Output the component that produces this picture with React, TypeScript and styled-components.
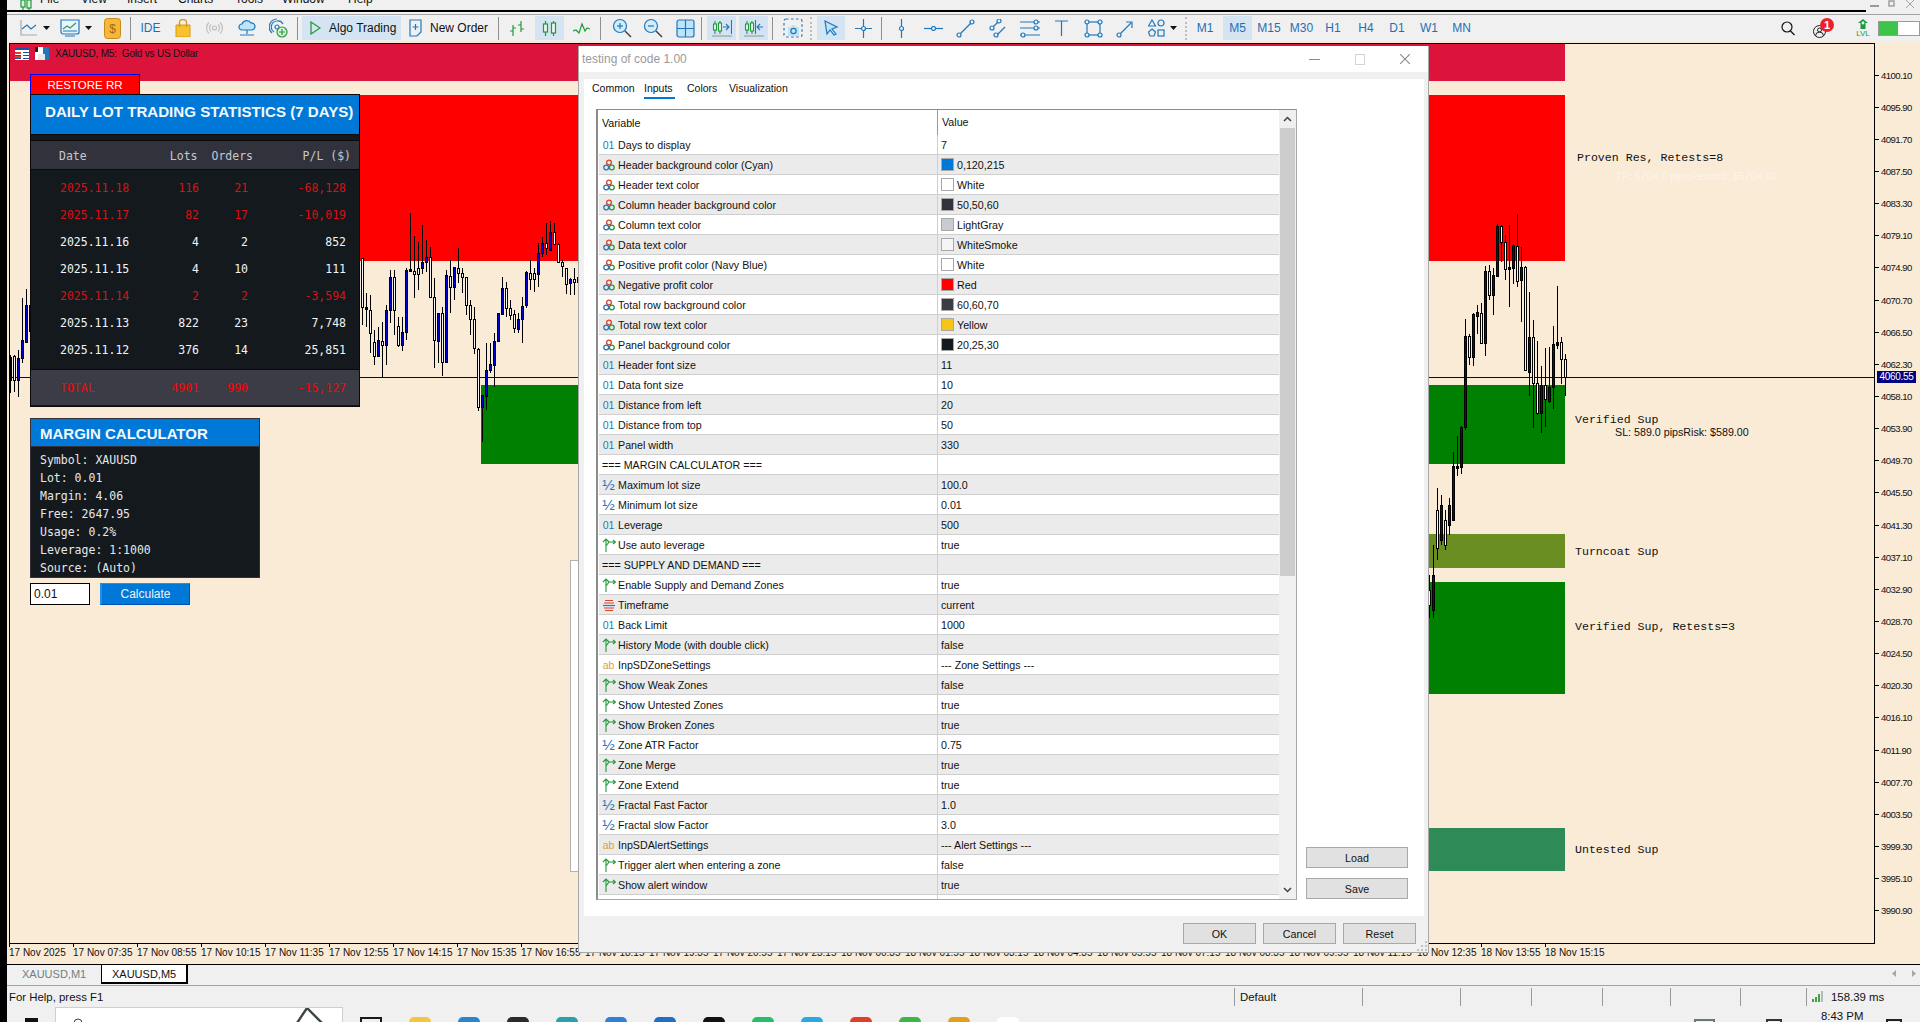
import { FunctionComponent, ReactNode } from 'react';
import styled, { createGlobalStyle } from 'styled-components';

const Global = createGlobalStyle`
  html, body { margin: 0; padding: 0; overflow: hidden; background: #f0f0f0; }
  * { box-sizing: border-box; }
`;

const SANS = '"Liberation Sans", Arial, sans-serif';
const MONO = '"DejaVu Sans Mono", monospace';
const COURIER = '"Liberation Mono", "Courier New", monospace';

const Root = styled.div`
  position: relative;
  display: flex;
  width: 1920px;
  height: 1022px;
  overflow: hidden;
  background: #f0f0f0;
  color: #111;
  font-family: ${SANS};
  font-size: 11px;
`;
const Strip = styled.div`
  width: 7px;
  background: #000;
`;
const Main = styled.div`
  display: flex;
  flex-direction: column;
  width: 1913px;
`;

/* ---------- menu + toolbar ---------- */
const MenuBar = styled.div`
  display: flex;
  height: 10px;
  padding-left: 13px;
  overflow: hidden;
  font-size: 12px;
  line-height: 12px;
`;
const MenuItem = styled.div<{ $w: number }>`
  width: ${p => p.$w}px;
  margin-top: -7px;
`;
const MenuIcon = styled.div`
  width: 20px;
`;
const WinCtrls = styled.div`
  display: flex;
  gap: 9px;
  margin-left: auto;
  margin-right: 6px;
`;
const BlackLine = styled.div`
  width: 1859px;
  height: 2px;
  background: #000;
`;
const GreyLine = styled.div`
  height: 1px;
  margin-top: 2px;
  background: #a5a5a5;
`;
const Toolbar = styled.div`
  display: flex;
  align-items: center;
  height: 26px;
  padding-left: 11px;
  color: #1f6fb5;
  font-size: 12px;
`;
const Tool = styled.div<{ $w: number; $ml?: number; $on?: boolean }>`
  display: flex;
  align-items: center;
  justify-content: center;
  flex: none;
  width: ${p => p.$w}px;
  height: 24px;
  margin-left: ${p => p.$ml ?? 0}px;
  background: ${p => (p.$on ? '#d5e4f2' : 'transparent')};
`;
const Sep = styled.div<{ $ml?: number }>`
  flex: none;
  width: 1px;
  height: 23px;
  margin-left: ${p => p.$ml ?? 0}px;
  background: #8f8f8f;
`;
const Dots = styled.div<{ $ml?: number }>`
  flex: none;
  width: 2px;
  height: 23px;
  margin-left: ${p => p.$ml ?? 0}px;
  border-left: 2px dotted #bdbdbd;
`;
const LabelTool = styled(Tool)`
  justify-content: flex-start;
  gap: 8px;
  padding-left: 8px;
  color: #111;
`;
const RightTools = styled.div`
  display: flex;
  align-items: center;
  margin-left: auto;
`;
const Badge = styled.span`
  position: absolute;
  top: -7px;
  left: 7px;
  width: 14px;
  height: 14px;
  border-radius: 50%;
  background: #e8232a;
  color: #fff;
  font-size: 11px;
  font-weight: 700;
  line-height: 14px;
  text-align: center;
`;
const UserWrap = styled.div`
  position: relative;
  width: 13px;
  height: 13px;
  margin: 7px 30px 0 0;
`;
const LvlWrap = styled.div`
  display: flex;
  flex-direction: column;
  align-items: center;
  width: 14px;
  margin-right: 8px;
  color: #1a9a3a;
  font-size: 8px;
  line-height: 8px;
`;
const Toggle = styled.div`
  display: flex;
  width: 42px;
  height: 15px;
  border: 1px solid #9a9a9a;
  background: #fff;
  &::before {
    content: '';
    width: 19px;
    background: #3cc34a;
  }
`;

/* ---------- chart ---------- */
const ChartArea = styled.div`
  display: flex;
  flex-direction: column;
  height: 923px;
  padding-top: 2px;
  background: #faebd7;
`;
const ChartRow = styled.div`
  display: flex;
  height: 901px;
  padding-left: 2px;
`;
const Frame = styled.div`
  position: relative;
  width: 1866px;
  height: 901px;
  border: 1px solid #000;
  overflow: hidden;
`;
const ChartSvg = styled.svg`
  position: absolute;
  left: 0;
  top: 0;
`;
const TitleStrip = styled.div`
  position: relative;
  display: flex;
  align-items: center;
  gap: 6px;
  width: 1555px;
  height: 37px;
  padding: 0 0 18px 5px;
  background: #dc143c;
  color: #111;
  font-size: 10px;
  letter-spacing: -0.2px;
`;
const ZoneLabel = styled.div<{ $x: number; $y: number }>`
  position: absolute;
  left: ${p => p.$x - 10}px;
  top: ${p => p.$y - 44 - 7}px;
  color: #111;
  font-family: ${COURIER};
  font-size: 11.6px;
  line-height: 14px;
  white-space: pre;
`;
const InfoLabel = styled(ZoneLabel)<{ $light?: boolean }>`
  color: ${p => (p.$light ? '#fdf3e8' : '#111')};
  font-family: ${SANS};
  font-size: 10.7px;
`;
const PriceAxis = styled.div`
  position: relative;
  flex: 1;
  padding-top: 16px;
`;
const PriceRow = styled.div`
  display: flex;
  align-items: center;
  gap: 2px;
  height: 32.154px;
  font-size: 9.6px;
  letter-spacing: -0.55px;
  &::before {
    content: '';
    width: 4px;
    height: 1px;
    background: #000;
  }
`;
const PriceTag = styled.div`
  position: absolute;
  top: 328px;
  left: 2px;
  width: 39px;
  height: 12px;
  background: #000080;
  color: #fff;
  font-size: 10px;
  letter-spacing: -0.3px;
  line-height: 12px;
  text-align: center;
`;
const TimeAxis = styled.div`
  display: flex;
  height: 20px;
  padding-left: 2px;
  overflow: hidden;
`;
const TimeCell = styled.div`
  position: relative;
  flex: none;
  width: 64px;
  padding-top: 3px;
  font-size: 10px;
  line-height: 12px;
  white-space: nowrap;
  &::before {
    content: '';
    position: absolute;
    left: 0;
    top: 0;
    width: 1px;
    height: 3px;
    background: #000;
  }
`;

/* ---------- left overlay panels ---------- */
const Overlay = styled.div`
  position: absolute;
  left: 30px;
  top: 74px;
  display: flex;
  flex-direction: column;
  align-items: flex-start;
`;
const RestoreBtn = styled.div`
  width: 110px;
  height: 20px;
  border: 1px solid #0000ff;
  border-bottom: 0;
  background: #ff0000;
  color: #fff;
  font-size: 11.5px;
  line-height: 21px;
  text-align: center;
`;
const StatsPanel = styled.div`
  width: 330px;
  height: 313px;
  border: 1px solid #0a0a0a;
  background: #14191e;
  font-family: ${MONO};
  font-size: 11.5px;
`;
const PanelHead = styled.div`
  height: 40px;
  padding: 7px 0 0 14px;
  border-bottom: 1px solid #0a0a0a;
  background: #0078d7;
  color: #f4f8fc;
  font-family: ${SANS};
  font-size: 15.1px;
  font-weight: 700;
  line-height: 20px;
  white-space: nowrap;
`;
const ColHead = styled.div`
  display: grid;
  grid-template-columns: 100px 38.5px 55.5px 98px;
  align-items: center;
  height: 30px;
  margin-top: 5px;
  padding: 2px 0 0 28px;
  border-top: 1px solid #0a0a0a;
  border-bottom: 1px solid #0a0a0a;
  background: #32323c;
  color: #c4c8cc;
`;
const DataRows = styled.div`
  display: flex;
  flex-direction: column;
  padding: 4px 0 6px;
  height: 199px;
`;
const DataRow = styled.div<{ $neg?: boolean }>`
  display: grid;
  grid-template-columns: 100px 39px 49px 98px;
  align-items: center;
  height: 27px;
  padding-left: 29px;
  color: ${p => (p.$neg ? '#d81212' : '#f2f4f6')};
`;
const TotalRow = styled(DataRow)`
  height: 36px;
  border-top: 1px solid #0a0a0a;
  background: #3c3c46;
  color: #ff0000;
`;
const Num = styled.span`
  text-align: right;
`;
const MarginPanel = styled.div`
  width: 230px;
  height: 160px;
  margin-top: 11px;
  border: 1px solid #32323c;
  background: #14191e;
  color: #e6e8ea;
  font-family: ${MONO};
  font-size: 11.5px;
`;
const MarginHead = styled.div`
  height: 28px;
  padding-left: 9px;
  background: #0078d7;
  color: #f4f8fc;
  font-family: ${SANS};
  font-size: 15px;
  font-weight: 700;
  line-height: 30px;
  border-bottom: 1px solid #32323c;
`;
const MarginBody = styled.div`
  padding: 4px 0 0 9px;
  line-height: 18px;
`;
const CalcRow = styled.div`
  display: flex;
  gap: 10px;
  margin-top: 5px;
`;
const LotInput = styled.div`
  width: 60px;
  height: 22px;
  padding-left: 3px;
  border: 1px solid #000;
  background: #fff;
  font-size: 12px;
  line-height: 20px;
`;
const CalcBtn = styled.div`
  width: 90px;
  height: 22px;
  border-style: solid;
  border-width: 1px 1px 1px 2px;
  border-color: #1e90e8 #0050b8 #0050b8 #1e90e8;
  background: #0078d7;
  color: #eaf4fc;
  font-size: 12px;
  line-height: 20px;
  text-align: center;
`;

/* ---------- dialog ---------- */
const GhostDialog = styled.div`
  position: absolute;
  left: 570px;
  top: 560px;
  width: 10px;
  height: 312px;
  border: 1px solid #b0b0b0;
  background: #fff;
`;
const Dialog = styled.div`
  position: absolute;
  left: 578px;
  top: 46px;
  display: flex;
  flex-direction: column;
  width: 851px;
  height: 907px;
  border: 1px solid #a8a8a8;
  border-top: 0;
  background: #f0f0f0;
`;
const DlgTitle = styled.div`
  display: flex;
  align-items: center;
  flex: none;
  height: 26px;
  padding-left: 3px;
  background: #fff;
  color: #9a9a9a;
  font-size: 12px;
`;
const DlgCtrls = styled.div`
  display: flex;
  align-items: center;
  gap: 35px;
  margin-left: auto;
  margin-right: 18px;
`;
const DlgPanel = styled.div`
  display: flex;
  flex-direction: column;
  flex: none;
  height: 837px;
  margin: 7px 4px 0 5px;
  background: #fff;
`;
const DlgTabs = styled.div`
  display: flex;
  flex: none;
  height: 30px;
  padding-left: 8px;
`;
const DlgTab = styled.div<{ $w: number; $on?: boolean }>`
  position: relative;
  width: ${p => p.$w}px;
  padding-top: 3px;
  line-height: 13px;
  font-size: 10.5px;
  &::after {
    content: '';
    display: ${p => (p.$on ? 'block' : 'none')};
    position: absolute;
    left: 0;
    top: 18px;
    width: 31px;
    height: 2px;
    background: #0078d7;
  }
`;
const DlgContent = styled.div`
  display: flex;
  flex: none;
  height: 791px;
  padding-left: 12px;
`;
const Table = styled.div`
  display: flex;
  width: 701px;
  height: 791px;
  border-style: solid;
  border-width: 1px 1px 1px 2px;
  border-color: #8c8c8c #a8a8a8 #a8a8a8 #8c8c8c;
  overflow: hidden;
`;
const TableList = styled.div`
  flex: 1;
  overflow: hidden;
`;
const HeadRow = styled.div`
  display: flex;
  align-items: center;
  height: 25px;
  padding-left: 4px;
  font-size: 10.7px;
`;
const HeadVar = styled.div`
  width: 336px;
  height: 100%;
  line-height: 27px;
  border-right: 1px solid #9a9a9a;
`;
const HeadVal = styled.div`
  padding-left: 4px;
  line-height: 27px;
`;
const ParamRow = styled.div<{ $alt: boolean }>`
  display: flex;
  align-items: center;
  height: 20px;
  margin-left: 1px;
  border-bottom: 1px solid #cfcfcf;
  background: ${p => (p.$alt ? '#ebebeb' : '#fff')};
  font-size: 10.7px;
  white-space: nowrap;
`;
const IconCell = styled.div`
  display: flex;
  align-items: center;
  justify-content: center;
  flex: none;
  width: 19px;
  font-size: 10px;
`;
const VarCell = styled.div`
  display: flex;
  align-items: center;
  width: 339px;
  height: 100%;
  border-right: 1px solid #cfcfcf;
`;
const SectionText = styled.span`
  padding-left: 3px;
`;
const ValCell = styled.div`
  display: flex;
  align-items: center;
  gap: 3px;
  padding-left: 3px;
`;
const Swatch = styled.span<{ $c: string }>`
  flex: none;
  width: 13px;
  height: 13px;
  border: 1px solid #a8a8a8;
  background: ${p => p.$c};
`;
const Glyph = styled.span<{ $c: string; $big?: boolean }>`
  color: ${p => p.$c};
  font-size: ${p => (p.$big ? 15 : 10.5)}px;
  line-height: 12px;
`;
const Scrollbar = styled.div`
  display: flex;
  flex-direction: column;
  align-items: center;
  flex: none;
  width: 17px;
  background: #f0f0f0;
`;
const ScrollEnd = styled.div`
  display: flex;
  align-items: center;
  justify-content: center;
  flex: none;
  height: 18px;
`;
const Thumb = styled.div`
  flex: none;
  width: 15px;
  height: 448px;
  background: #cdcdcd;
`;
const ScrollTrack = styled.div`
  flex: 1;
`;
const SideBtns = styled.div`
  display: flex;
  flex-direction: column;
  justify-content: flex-end;
  gap: 10px;
  margin-left: 9px;
  padding-bottom: 1px;
`;
const DlgBtn = styled.div<{ $w?: number }>`
  width: ${p => p.$w ?? 102}px;
  height: 21px;
  border: 1px solid #a8a8a8;
  background: #e1e1e1;
  font-size: 10.7px;
  line-height: 20px;
  text-align: center;
`;
const DlgFooter = styled.div`
  position: relative;
  display: flex;
  justify-content: flex-end;
  gap: 7px;
  padding: 7px 12px 0 0;
`;
const Grip = styled.svg`
  position: absolute;
  right: 0;
  bottom: -8px;
`;

/* ---------- bottom bars ---------- */
const TabsBar = styled.div`
  display: flex;
  align-items: flex-start;
  height: 22px;
  padding-left: 1px;
  border-top: 1px solid #000;
  border-bottom: 1px solid #a5a5a5;
  font-size: 11px;
`;
const ChartTab = styled.div<{ $on?: boolean }>`
  width: ${p => (p.$on ? 87 : 93)}px;
  height: 19px;
  padding-left: ${p => (p.$on ? 10 : 14)}px;
  border: ${p => (p.$on ? '1px solid #000' : '0')};
  border-width: 0 2px 2px 1px;
  background: ${p => (p.$on ? '#fff' : 'transparent')};
  color: ${p => (p.$on ? '#111' : '#6f8080')};
  line-height: 19px;
`;
const TabArrows = styled.div`
  display: flex;
  gap: 16px;
  margin: 5px 4px 0 auto;
`;
const StatusBar = styled.div`
  display: flex;
  align-items: center;
  height: 21px;
  font-size: 11.4px;
`;
const StatusCell = styled.div<{ $w: number }>`
  display: flex;
  align-items: center;
  gap: 7px;
  flex: none;
  width: ${p => p.$w}px;
  height: 18px;
  padding-left: 5px;
  border-left: 1px solid #9a9a9a;
  &:first-child {
    padding-left: 2px;
    border-left: 0;
  }
`;
const Taskbar = styled.div`
  position: relative;
  display: flex;
  height: 15px;
  overflow: hidden;
  background: #f0f0f0;
`;
const SearchBox = styled.div`
  position: relative;
  flex: none;
  width: 288px;
  height: 15px;
  margin-left: 48px;
  border: 1px solid #cfcfcf;
  border-bottom: 0;
  background: #fff;
`;
const TaskIcons = styled.div`
  display: flex;
  gap: 27px;
  margin-left: 17px;
  padding-top: 10px;
`;
const TaskIcon = styled.div<{ $c: string; $outline?: boolean }>`
  flex: none;
  width: 22px;
  height: 22px;
  border-radius: ${p => (p.$outline ? 0 : '5px 5px 0 0')};
  border: ${p => (p.$outline ? `2px solid ${p.$c}` : '0')};
  background: ${p => (p.$outline ? 'transparent' : p.$c)};
`;
const StartMark = styled.div`
  position: absolute;
  left: 18px;
  top: 11px;
  width: 13px;
  height: 6px;
  background: #111;
`;
const Clock = styled.div`
  position: absolute;
  left: 1814px;
  top: 3px;
  font-size: 11.4px;
  line-height: 13px;
`;
const TrayBox = styled.div<{ $c: string; $x: number; $w: number }>`
  position: absolute;
  left: ${p => p.$x - 7}px;
  top: 12px;
  width: ${p => p.$w}px;
  height: 10px;
  border: 2px solid ${p => p.$c};
`;

/* ---------- icons ---------- */
const B = '#1f78bd';
const Svg: FunctionComponent<{ w: number; h: number; children: ReactNode }> = ({ w, h, children }) => (
  <svg width={w} height={h} viewBox={`0 0 ${w} ${h}`} fill="none" stroke={B} strokeWidth={1.2}>
    {children}
  </svg>
);
const Caret = () => (
  <svg width={7} height={4} viewBox="0 0 7 4">
    <path d="M0 0h7L3.5 4z" fill="#111" />
  </svg>
);
const IcLine = () => (
  <Svg w={18} h={18}>
    <path d="M1 1v15h16" stroke="#a8a8a8" />
    <path d="M2 10l5-4 4 4 5-4" />
  </Svg>
);
const IcMonitor = () => (
  <Svg w={20} h={20}>
    <path d="M1 2h18v12a2 2 0 0 1-2 2H3a2 2 0 0 1-2-2z" fill="#e8f4fc" />
    <path d="M3 11l4-3 3 2 6-5" stroke="#3a9a4a" />
    <path d="M3 13h14M5 18h10" />
  </Svg>
);
const IcDollar = () => (
  <svg width={17} height={21} viewBox="0 0 17 21">
    <rect x={0.5} y={0.5} width={16} height={20} rx={3} fill="#f4b83a" stroke="#c98a1a" />
    <text x={8.5} y={15} fontSize={12} fontFamily={SANS} textAnchor="middle" fill="#a8681a">
      $
    </text>
  </svg>
);
const IcBag = () => (
  <svg width={16} height={18} viewBox="0 0 16 18">
    <path d="M1 6h14v12H1z" fill="#f6c22e" stroke="#d89a1a" />
    <path d="M4.5 8V3.5a3.5 3 0 0 1 7 0V8" fill="none" stroke="#d89a1a" strokeWidth={1.4} />
  </svg>
);
const IcSignal = () => (
  <svg width={17} height={14} viewBox="0 0 17 14" fill="none" stroke="#bdbdbd" strokeWidth={1.1}>
    <circle cx={8.5} cy={7} r={2} />
    <path d="M5 3.5a5 5 0 0 0 0 7M12 3.5a5 5 0 0 1 0 7M2.8 1.5a8 8 0 0 0 0 11M14.2 1.5a8 8 0 0 1 0 11" />
  </svg>
);
const IcCloud = () => (
  <Svg w={18} h={18}>
    <path d="M4 11a3 3 0 0 1 0-6 5 5 0 0 1 9-1 3.5 3.5 0 0 1 1 7z" fill="#bfe3f7" />
    <path d="M9 11v4M2 16h14" />
  </Svg>
);
const IcSat = () => (
  <Svg w={19} h={20}>
    <circle cx={8} cy={9} r={2} />
    <path d="M8 3a6 6 0 0 0-3 11M8 1a8 8 0 0 0-5 14M14 6a6 6 0 0 0-6-3" />
    <circle cx={13} cy={14} r={5} fill="#d8f2dc" stroke="#2a9a3a" />
    <path d="M13 11v6M10 14h6" stroke="#2a9a3a" />
  </Svg>
);
const IcPlay = () => (
  <svg width={11} height={14} viewBox="0 0 11 14">
    <path d="M1 1l9 6-9 6z" fill="none" stroke="#2a9a3a" strokeWidth={1.3} />
  </svg>
);
const IcDoc = () => (
  <Svg w={13} h={18}>
    <path d="M1 1h11v12l-4 4H1z" />
    <path d="M6.5 5v6M3.5 8h6" />
  </Svg>
);
const G = '#1f9a3a';
const IcBars = () => (
  <svg width={16} height={17} viewBox="0 0 16 17" fill="none" stroke={G} strokeWidth={1.2}>
    <path d="M4 5v11M1 11h3M4 8h3M12 1v11M9 5h3M12 9h3" />
  </svg>
);
const IcCandles = () => (
  <svg width={15} height={17} viewBox="0 0 15 17" fill="none" stroke={G} strokeWidth={1.2}>
    <path d="M3.5 1v15M11.5 1v15" />
    <rect x={1.5} y={4} width={4} height={8} fill="#eaf7ec" />
    <rect x={9.5} y={3} width={4} height={10} fill="#eaf7ec" />
  </svg>
);
const IcChartLine = () => (
  <svg width={18} height={12} viewBox="0 0 18 12" fill="none" stroke={G} strokeWidth={1.2}>
    <path d="M0 9l3-1 3 3 3-9 3 7 2-3 3 1" />
  </svg>
);
const IcZoom = ({ plus }: { plus?: boolean }) => (
  <Svg w={20} h={20}>
    <circle cx={8} cy={8} r={6.5} fill="#d3ecfa" />
    <path d="M5 8h6" />
    {plus && <path d="M8 5v6" />}
    <path d="M13 13l6 6" stroke="#3d3d3d" strokeWidth={1.4} />
  </Svg>
);
const IcGrid = () => (
  <Svg w={19} h={19}>
    <rect x={1} y={1} width={17} height={17} rx={2} fill="#bfe3f7" />
    <path d="M9.5 1v17M1 9.5h17" />
  </Svg>
);
const IcShift = ({ left }: { left?: boolean }) => (
  <svg width={20} height={18} viewBox="0 0 20 18" fill="none" strokeWidth={1.1}>
    <path d="M3 2v13M8 2v13" stroke={G} />
    <rect x={1.5} y={5} width={3} height={6} fill="#eaf7ec" stroke={G} />
    <rect x={6.5} y={4} width={3} height={8} fill="#eaf7ec" stroke={G} />
    <path d={left ? 'M19 8h-6M16 5l-3 3 3 3' : 'M11 8h6M14 5l3 3-3 3'} stroke={B} />
    {!left && <path d="M19.5 1v14" stroke={B} />}
    {left && <path d="M11.5 1v14" stroke={B} />}
    <path d="M0 17h20" stroke="#9a9a9a" />
  </svg>
);
const IcShot = () => (
  <Svg w={20} h={20}>
    <rect x={1} y={1} width={18} height={18} rx={2} strokeDasharray="2.5 2.5" />
    <path d="M5 9h3l1-2h3l1 2h3v9H5z" fill="#bfe3f7" stroke="none" />
    <circle cx={10.5} cy={13} r={2.6} />
  </Svg>
);
const IcCursor = () => (
  <Svg w={15} h={16}>
    <path d="M1 1l12 6-5 2 4 5-2 1-4-5-3 4z" fill="#bfe3f7" />
  </Svg>
);
const Node = ({ x, y }: { x: number; y: number }) => <circle cx={x} cy={y} r={2} fill="#f0f0f0" />;
const IcCross = () => (
  <Svg w={17} h={19}>
    <path d="M8.5 0v7M8.5 12v7M0 9.5h6M11 9.5h6" />
    <Node x={8.5} y={9.5} />
  </Svg>
);
const IcVLine = () => (
  <Svg w={5} h={19}>
    <path d="M2.5 0v19" />
    <Node x={2.5} y={9.5} />
  </Svg>
);
const IcHLine = () => (
  <Svg w={19} h={5}>
    <path d="M0 2.5h19" />
    <Node x={9.5} y={2.5} />
  </Svg>
);
const IcTrend = () => (
  <Svg w={19} h={19}>
    <path d="M3 16L16 3" />
    <Node x={3} y={16} />
    <Node x={16} y={3} />
  </Svg>
);
const IcChannel = () => (
  <Svg w={19} h={19}>
    <path d="M2 11l9-9M8 17l9-9" />
    <Node x={4} y={9} />
    <Node x={11} y={2} />
    <Node x={8} y={16} />
  </Svg>
);
const IcFibo = () => (
  <Svg w={20} h={19}>
    <path d="M0 3h20M0 9h20M0 16h20" />
    <Node x={16} y={3} />
    <Node x={16} y={9} />
    <Node x={3} y={16} />
  </Svg>
);
const IcText = () => (
  <Svg w={13} h={16}>
    <path d="M0 1h13M6.5 1v15" />
  </Svg>
);
const IcRect = () => (
  <Svg w={19} h={19}>
    <rect x={3} y={3} width={13} height={13} />
    <Node x={3} y={3} />
    <Node x={16} y={3} />
    <Node x={3} y={16} />
    <Node x={16} y={16} />
  </Svg>
);
const IcArrow = () => (
  <Svg w={19} h={19}>
    <path d="M3 16L15 4M10 3h6v6" />
    <Node x={3} y={16} />
  </Svg>
);
const IcShapes = () => (
  <Svg w={17} h={18}>
    <path d="M4 1l3.5 6h-7z" />
    <circle cx={13} cy={4} r={3} />
    <path d="M4 10l3.5 3-1.5 4H2l-1.5-4z" />
    <rect x={10} y={11} width={6} height={6} />
  </Svg>
);
const IcSearch = () => (
  <svg width={14} height={15} viewBox="0 0 14 15" fill="none" stroke="#111" strokeWidth={1.2}>
    <circle cx={6} cy={6} r={5} />
    <path d="M9.5 10l4 4" />
  </svg>
);
const IcUser = () => (
  <svg width={13} height={13} viewBox="0 0 13 13" fill="none" stroke="#222" strokeWidth={1}>
    <circle cx={6.5} cy={6.5} r={6} />
    <circle cx={6.5} cy={5} r={2} />
    <path d="M2.5 11a4 4 0 0 1 8 0" />
  </svg>
);
const IcLvl = () => (
  <svg width={12} height={11} viewBox="0 0 12 11">
    <path d="M6 0l5 4H8.5v6h-5V4H1z" fill="#1a9a3a" />
    <circle cx={6} cy={4} r={1.4} fill="#fff" />
  </svg>
);
const IcCandleApp = () => (
  <svg width={12} height={10} viewBox="0 0 12 10" fill="none" stroke="#1f9a3a" strokeWidth={1.2}>
    <path d="M3 0v10M9 0v10" />
    <rect x={1} y={0} width={4} height={7} fill="#d8f2dc" />
    <rect x={7} y={0} width={4} height={8} fill="#d8f2dc" />
  </svg>
);
const IcColor = () => (
  <svg width={12} height={12} viewBox="0 0 12 12" fill="none" strokeWidth={1.3}>
    <circle cx={6} cy={3.5} r={2.4} stroke="#d8432a" />
    <circle cx={3.2} cy={8.5} r={2.4} stroke="#1f78bd" />
    <circle cx={8.8} cy={8.5} r={2.4} stroke="#2a9a3a" />
  </svg>
);
const IcBool = () => (
  <svg width={14} height={14} viewBox="0 0 14 14" fill="none" stroke="#1f9a3a" strokeWidth={1.1}>
    <path d="M4 14V1M1 4l3-3 3 3M4 8l3-4h6M11 2l2.5 2L11 6" />
  </svg>
);
const IcEnum = () => (
  <svg width={12} height={12} viewBox="0 0 12 12" fill="none" strokeWidth={1.2}>
    <path d="M2 1.5h8M1 4h10" stroke="#d8432a" />
    <path d="M0 6.5h12" stroke="#1f78bd" />
    <path d="M1 9h10M2 11.5h8" stroke="#d8432a" />
  </svg>
);

/* ---------- data ---------- */
type Kind = 'int' | 'dbl' | 'color' | 'bool' | 'enum' | 'str' | 'sec';
type Param = [Kind, string, string?, string?];

const params: Param[] = [
  ['int', 'Days to display', '7'],
  ['color', 'Header background color (Cyan)', '0,120,215', '#0078d7'],
  ['color', 'Header text color', 'White', '#ffffff'],
  ['color', 'Column header background color', '50,50,60', '#32323c'],
  ['color', 'Column text color', 'LightGray', '#c8ccd0'],
  ['color', 'Data text color', 'WhiteSmoke', '#f5f5f5'],
  ['color', 'Positive profit color (Navy Blue)', 'White', '#ffffff'],
  ['color', 'Negative profit color', 'Red', '#ff0000'],
  ['color', 'Total row background color', '60,60,70', '#3c3c46'],
  ['color', 'Total row text color', 'Yellow', '#f5c518'],
  ['color', 'Panel background color', '20,25,30', '#14191e'],
  ['int', 'Header font size', '11'],
  ['int', 'Data font size', '10'],
  ['int', 'Distance from left', '20'],
  ['int', 'Distance from top', '50'],
  ['int', 'Panel width', '330'],
  ['sec', '=== MARGIN CALCULATOR ==='],
  ['dbl', 'Maximum lot size', '100.0'],
  ['dbl', 'Minimum lot size', '0.01'],
  ['int', 'Leverage', '500'],
  ['bool', 'Use auto leverage', 'true'],
  ['sec', '=== SUPPLY AND DEMAND ==='],
  ['bool', 'Enable Supply and Demand Zones', 'true'],
  ['enum', 'Timeframe', 'current'],
  ['int', 'Back Limit', '1000'],
  ['bool', 'History Mode (with double click)', 'false'],
  ['str', 'InpSDZoneSettings', '--- Zone Settings ---'],
  ['bool', 'Show Weak Zones', 'false'],
  ['bool', 'Show Untested Zones', 'true'],
  ['bool', 'Show Broken Zones', 'true'],
  ['dbl', 'Zone ATR Factor', '0.75'],
  ['bool', 'Zone Merge', 'true'],
  ['bool', 'Zone Extend', 'true'],
  ['dbl', 'Fractal Fast Factor', '1.0'],
  ['dbl', 'Fractal slow Factor', '3.0'],
  ['str', 'InpSDAlertSettings', '--- Alert Settings ---'],
  ['bool', 'Trigger alert when entering a zone', 'false'],
  ['bool', 'Show alert window', 'true'],
  ['bool', ''],
];

const stats = [
  ['2025.11.18', '116', '21', '-68,128'],
  ['2025.11.17', '82', '17', '-10,019'],
  ['2025.11.16', '4', '2', '852'],
  ['2025.11.15', '4', '10', '111'],
  ['2025.11.14', '2', '2', '-3,594'],
  ['2025.11.13', '822', '23', '7,748'],
  ['2025.11.12', '376', '14', '25,851'],
];

const margin = ['Symbol: XAUUSD', 'Lot: 0.01', 'Margin: 4.06', 'Free: 2647.95', 'Usage: 0.2%', 'Leverage: 1:1000', 'Source: (Auto)'];

const prices = [
  '4100.10', '4095.90', '4091.70', '4087.50', '4083.30', '4079.10', '4074.90', '4070.70', '4066.50',
  '4062.30', '4058.10', '4053.90', '4049.70', '4045.50', '4041.30', '4037.10', '4032.90', '4028.70',
  '4024.50', '4020.30', '4016.10', '4011.90', '4007.70', '4003.50', '3999.30', '3995.10', '3990.90',
];

const times = [
  '17 Nov 2025', '17 Nov 07:35', '17 Nov 08:55', '17 Nov 10:15', '17 Nov 11:35', '17 Nov 12:55', '17 Nov 14:15',
  '17 Nov 15:35', '17 Nov 16:55', '17 Nov 18:15', '17 Nov 19:35', '17 Nov 20:55', '17 Nov 23:15', '18 Nov 00:35',
  '18 Nov 01:55', '18 Nov 03:15', '18 Nov 04:35', '18 Nov 05:55', '18 Nov 07:15', '18 Nov 08:35', '18 Nov 09:55',
  '18 Nov 11:15', '18 Nov 12:35', '18 Nov 13:55', '18 Nov 15:15',
];

// candle = wick top, wick bottom, body top, body bottom, fill
type C = [number, number, number, number, string];

// y values as read off the chart, page y = 200 + v / 3
const midCandles: C[] = [
  [175, 375, 175, 322, 'w'], [280, 380, 322, 328, 'k'], [285, 460, 330, 400, 'w'], [390, 495, 425, 467, 'w'],
  [380, 470, 420, 468, 'b'], [365, 530, 422, 436, 'w'], [315, 495, 330, 436, 'b'], [210, 370, 232, 330, 'b'],
  [210, 405, 232, 330, 'w'], [350, 440, 377, 435, 'w'], [350, 452, 397, 435, 'b'], [205, 420, 210, 397, 'b'],
  [40, 215, 208, 212, 'k'], [108, 295, 212, 223, 'w'], [125, 270, 205, 222, 'w'], [75, 222, 185, 205, 'b'],
  [120, 215, 172, 187, 'b'], [140, 295, 172, 292, 'w'], [235, 505, 290, 420, 'w'], [340, 490, 340, 422, 'b'],
  [320, 527, 340, 485, 'w'], [210, 490, 225, 487, 'b'], [180, 340, 228, 260, 'w'], [200, 300, 202, 260, 'b'],
  [145, 250, 205, 218, 'w'], [205, 280, 218, 230, 'w'], [230, 345, 232, 315, 'w'], [300, 405, 315, 358, 'w'],
  [320, 462, 358, 445, 'w'], [445, 633, 448, 620, 'w'], [585, 725, 585, 620, 'b'], [430, 630, 510, 587, 'b'],
  [430, 520, 492, 510, 'b'], [400, 560, 422, 495, 'b'], [340, 425, 340, 422, 'b'], [232, 345, 265, 342, 'b'],
  [245, 350, 265, 325, 'w'], [300, 360, 325, 345, 'w'], [330, 400, 343, 385, 'w'], [340, 400, 357, 387, 'b'],
  [292, 428, 317, 358, 'b'], [212, 325, 217, 315, 'b'], [180, 270, 218, 238, 'w'], [205, 275, 220, 238, 'w'],
  [130, 262, 160, 222, 'b'], [110, 170, 130, 160, 'b'], [70, 165, 130, 145, 'w'], [62, 150, 95, 150, 'b'],
  [70, 135, 95, 132, 'w'], [130, 190, 132, 187, 'w'], [180, 230, 187, 198, 'w'], [205, 282, 205, 252, 'w'],
  [235, 285, 238, 250, 'b'], [205, 285, 238, 245, 'w'], [190, 260, 232, 245, 'b'],
];

const rightCandles: C[] = [
  [755, 960, 798, 960, 'b'], [708, 828, 798, 800, 'k'], [678, 822, 682, 800, 'b'], [357, 690, 408, 682, 'b'],
  [403, 495, 408, 470, 'w'], [340, 498, 342, 470, 'b'], [315, 403, 336, 347, 'b'], [310, 428, 340, 428, 'w'],
  [198, 467, 213, 428, 'b'], [195, 300, 213, 285, 'w'], [205, 345, 225, 285, 'b'], [72, 228, 78, 228, 'b'],
  [75, 185, 78, 125, 'w'], [105, 240, 125, 206, 'w'], [75, 320, 202, 206, 'k'], [132, 252, 135, 203, 'b'],
  [42, 260, 138, 242, 'w'], [142, 365, 202, 240, 'b'], [198, 510, 202, 510, 'w'], [277, 587, 412, 515, 'b'],
  [360, 683, 412, 550, 'w'], [422, 645, 550, 638, 'w'], [497, 698, 555, 638, 'b'], [443, 680, 555, 598, 'w'],
  [440, 608, 560, 602, 'b'], [378, 627, 433, 562, 'b'], [258, 447, 427, 434, 'k'], [411, 552, 427, 478, 'w'],
  [462, 587, 478, 532, 'w'],
];

const risingCandles: C[] = [
  [1125, 1254, 1170, 1215, 'w'], [1035, 1254, 1125, 1230, 'b'], [864, 1080, 930, 1044, 'w'], [885, 1035, 915, 1020, 'b'],
  [930, 1050, 960, 1035, 'w'], [895, 1005, 915, 975, 'b'],
];

const leftCandles: C[] = [
  [465, 578, 470, 540, 'k'], [465, 575, 468, 540, 'w'], [450, 590, 475, 540, 'b'], [295, 488, 420, 475, 'b'],
  [268, 428, 315, 425, 'b'], [290, 393, 315, 393, 'w'],
];

const fills: Record<string, string> = { w: '#f7f7f7', b: '#0000d0', k: '#000' };

const Candle = ({ x, c }: { x: number; c: C }) => {
  const y = (v: number) => Math.round(200 + v / 3);
  const [wt, wb, bt, bb, f] = c;
  const h = Math.max(y(bb) - y(bt), 2);
  return (
    <g>
      <rect x={x} y={y(wt)} width={1} height={y(wb) - y(wt)} fill="#000" />
      <rect x={x - 1} y={y(bt)} width={3} height={h + 1} fill="#000" />
      {h > 2 && <rect x={x} y={y(bt) + 1} width={1} height={h - 1} fill={fills[f]} />}
    </g>
  );
};

const Chart = () => (
  <ChartSvg width={1864} height={899} viewBox="10 44 1864 899" shapeRendering="crispEdges">
    <rect x={360} y={95} width={218} height={166} fill="#ff0000" />
    <rect x={481} y={385} width={97} height={79} fill="#008000" />
    <rect x={1428} y={95} width={137} height={166} fill="#ff0000" />
    <rect x={1428} y={385} width={137} height={79} fill="#008000" />
    <rect x={1428} y={534} width={137} height={34} fill="#6b8e23" />
    <rect x={1428} y={582} width={137} height={112} fill="#008000" />
    <rect x={1428} y={828} width={137} height={43} fill="#2e8b57" />
    <rect x={10} y={377} width={1864} height={1} fill="#000080" />
    {leftCandles.map((c, i) => (
      <Candle key={`l${i}`} x={10 + 4 * i} c={c} />
    ))}
    {midCandles.map((c, i) => (
      <Candle key={`m${i}`} x={362 + 4 * i} c={c} />
    ))}
    {risingCandles.map((c, i) => (
      <Candle key={`r${i}`} x={1429 + 4 * i} c={c} />
    ))}
    {rightCandles.map((c, i) => (
      <Candle key={`n${i}`} x={1453 + 4 * i} c={c} />
    ))}
  </ChartSvg>
);

const ParamIcon = ({ kind }: { kind: Kind }) => {
  if (kind === 'int') return <Glyph $c="#1f78bd">01</Glyph>;
  if (kind === 'dbl') return <Glyph $c="#1f78bd" $big>½</Glyph>;
  if (kind === 'str') return <Glyph $c="#e0a030">ab</Glyph>;
  if (kind === 'color') return <IcColor />;
  if (kind === 'enum') return <IcEnum />;
  return <IcBool />;
};

const X = ({ s = 9, c = '#8a8a8a' }: { s?: number; c?: string }) => (
  <svg width={s} height={s} viewBox="0 0 9 9" fill="none" stroke={c} strokeWidth={1}>
    <path d="M0 0l9 9M9 0L0 9" />
  </svg>
);

const timeframes: [string, number, boolean?][] = [
  ['M1', 36], ['M5', 29, true], ['M15', 34], ['M30', 31], ['H1', 32], ['H4', 34], ['D1', 28], ['W1', 36], ['MN', 29],
];

const taskColors = ['#f4c542', '#2a86d0', '#2b2b2b', '#2aa0a8', '#2f80d8', '#1f6fc4', '#111', '#25c065', '#2aa8e0', '#e0402a', '#3cb54a', '#e0a020', '#ffffff'];

const App: FunctionComponent = () => (
  <Root>
    <Global />
    <Strip />
    <Main>
      <MenuBar>
        <MenuIcon>
          <IcCandleApp />
        </MenuIcon>
        <MenuItem $w={41}>File</MenuItem>
        <MenuItem $w={46}>View</MenuItem>
        <MenuItem $w={51}>Insert</MenuItem>
        <MenuItem $w={57}>Charts</MenuItem>
        <MenuItem $w={47}>Tools</MenuItem>
        <MenuItem $w={66}>Window</MenuItem>
        <MenuItem $w={40}>Help</MenuItem>
        <WinCtrls>
          <svg width={9} height={9} viewBox="0 0 9 9">
            <rect x={0} y={5} width={9} height={2} fill="#9a9a9a" />
          </svg>
          <svg width={9} height={9} viewBox="0 0 9 9" fill="none" stroke="#9a9a9a" strokeWidth={1.4}>
            <rect x={1} y={1} width={5} height={5} />
          </svg>
          <X c="#9a9a9a" s={8} />
        </WinCtrls>
      </MenuBar>
      <BlackLine />
      <GreyLine />
      <Toolbar>
        <Tool $w={22}><IcLine /></Tool>
        <Tool $w={12}><Caret /></Tool>
        <Tool $w={24} $ml={6}><IcMonitor /></Tool>
        <Tool $w={12}><Caret /></Tool>
        <Tool $w={20} $ml={8}><IcDollar /></Tool>
        <Sep $ml={8} />
        <Tool $w={39}>IDE</Tool>
        <Tool $w={25}><IcBag /></Tool>
        <Tool $w={38}><IcSignal /></Tool>
        <Tool $w={27}><IcCloud /></Tool>
        <Tool $w={37}><IcSat /></Tool>
        <Sep />
        <LabelTool $w={99} $ml={4} $on>
          <IcPlay />
          <span>Algo Trading</span>
        </LabelTool>
        <LabelTool $w={97}>
          <IcDoc />
          <span>New Order</span>
        </LabelTool>
        <Sep />
        <Tool $w={36}><IcBars /></Tool>
        <Tool $w={29} $on><IcCandles /></Tool>
        <Tool $w={36}><IcChartLine /></Tool>
        <Sep />
        <Tool $w={42}><IcZoom plus /></Tool>
        <Tool $w={20}><IcZoom /></Tool>
        <Tool $w={24} $ml={10}><IcGrid /></Tool>
        <Sep $ml={4} />
        <Tool $w={29} $ml={5} $on><IcShift /></Tool>
        <Tool $w={29} $ml={3} $on><IcShift left /></Tool>
        <Sep $ml={4} />
        <Tool $w={20} $ml={10}><IcShot /></Tool>
        <Dots $ml={7} />
        <Tool $w={28} $ml={5} $on><IcCursor /></Tool>
        <Tool $w={36}><IcCross /></Tool>
        <Sep />
        <Tool $w={38}><IcVLine /></Tool>
        <Tool $w={26}><IcHLine /></Tool>
        <Tool $w={38}><IcTrend /></Tool>
        <Tool $w={27}><IcChannel /></Tool>
        <Tool $w={38}><IcFibo /></Tool>
        <Tool $w={24}><IcText /></Tool>
        <Tool $w={40}><IcRect /></Tool>
        <Tool $w={24}><IcArrow /></Tool>
        <Tool $w={26} $ml={6}><IcShapes /></Tool>
        <Tool $w={8}><Caret /></Tool>
        <Dots $ml={8} />
        {timeframes.map(([t, w, on]) => (
          <Tool key={t} $w={w} $on={on}>{t}</Tool>
        ))}
        <RightTools>
          <Tool $w={14}><IcSearch /></Tool>
          <Tool $w={18} />
          <UserWrap>
            <IcUser />
            <Badge>1</Badge>
          </UserWrap>
          <LvlWrap>
            <IcLvl />
            LVL
          </LvlWrap>
          <Toggle />
        </RightTools>
      </Toolbar>
      <ChartArea>
        <ChartRow>
          <Frame>
            <Chart />
            <TitleStrip>
              <svg width={14} height={12} viewBox="0 0 14 12">
                <rect width={14} height={12} fill="#fff" />
                <path d="M0 0h14v2H0zM0 4h6v1H0zM8 4h6v1H8zM0 7h6v1H0zM8 7h6v1H8zM0 10h6v1H0zM8 10h6v1H8z" fill="#1f4fa0" />
                <path d="M0 4h6v2H0zM0 8h6v2H0z" fill="#d8432a" />
              </svg>
              <svg width={14} height={13} viewBox="0 0 14 13">
                <rect width={14} height={13} fill="#fff" />
                <path d="M8 0h6v13H8z" fill="#1f78bd" />
                <path d="M0 0h3v5H0z" fill="#222" />
                <path d="M3 7h7v6H3z" fill="#e8e8e8" />
              </svg>
              <span>XAUUSD, M5:&nbsp; Gold vs US Dollar</span>
            </TitleStrip>
            <ZoneLabel $x={1577} $y={158}>Proven Res, Retests=8</ZoneLabel>
            <InfoLabel $x={1615} $y={176} $light>TP: 5704.0 pipsReward: $5704.00</InfoLabel>
            <ZoneLabel $x={1575} $y={420}>Verified Sup</ZoneLabel>
            <InfoLabel $x={1615} $y={432}>SL: 589.0 pipsRisk: $589.00</InfoLabel>
            <ZoneLabel $x={1575} $y={552}>Turncoat Sup</ZoneLabel>
            <ZoneLabel $x={1575} $y={627}>Verified Sup, Retests=3</ZoneLabel>
            <ZoneLabel $x={1575} $y={850}>Untested Sup</ZoneLabel>
          </Frame>
          <PriceAxis>
            {prices.map(p => (
              <PriceRow key={p}>{p}</PriceRow>
            ))}
            <PriceTag>4060.55</PriceTag>
          </PriceAxis>
        </ChartRow>
        <TimeAxis>
          {times.map(t => (
            <TimeCell key={t}>{t}</TimeCell>
          ))}
        </TimeAxis>
      </ChartArea>
      <TabsBar>
        <ChartTab>XAUUSD,M1</ChartTab>
        <ChartTab $on>XAUUSD,M5</ChartTab>
        <TabArrows>
          <svg width={4} height={7} viewBox="0 0 4 7"><path d="M4 0v7L0 3.5z" fill="#a8a8a8" /></svg>
          <svg width={4} height={7} viewBox="0 0 4 7"><path d="M0 0v7l4-3.5z" fill="#a8a8a8" /></svg>
        </TabArrows>
      </TabsBar>
      <StatusBar>
        <StatusCell $w={1227}>For Help, press F1</StatusCell>
        <StatusCell $w={128}>Default</StatusCell>
        <StatusCell $w={98} />
        <StatusCell $w={71} />
        <StatusCell $w={71} />
        <StatusCell $w={68} />
        <StatusCell $w={70} />
        <StatusCell $w={66} />
        <StatusCell $w={107}>
          <svg width={12} height={11} viewBox="0 0 12 11">
            <path d="M0 8h2v3H0zM3 6h2v5H3zM6 3h2v8H6z" fill="#3aa53a" />
            <path d="M9 0h2v11H9z" fill="#b8b8b8" />
          </svg>
          158.39 ms
        </StatusCell>
      </StatusBar>
      <Taskbar>
        <StartMark />
        <SearchBox>
          <svg width={286} height={15} viewBox="0 0 286 15" fill="none" stroke="#3c4646" strokeWidth={2.4}>
            <path d="M251 0l-10 15M251 0l15 15" />
            <circle cx={22} cy={15} r={4} stroke="#444" strokeWidth={1} />
          </svg>
        </SearchBox>
        <TaskIcons>
          <TaskIcon $c="#1a1a1a" $outline />
          {taskColors.map((c, i) => (
            <TaskIcon key={i} $c={c} />
          ))}
        </TaskIcons>
        <TrayBox $c="#6a7a70" $x={1694} $w={21} />
        <TrayBox $c="#333" $x={1766} $w={16} />
        <Clock>8:43 PM</Clock>
        <TrayBox $c="#222" $x={1886} $w={16} />
      </Taskbar>
    </Main>

    <Overlay>
      <RestoreBtn>RESTORE RR</RestoreBtn>
      <StatsPanel>
        <PanelHead>DAILY LOT TRADING STATISTICS (7 DAYS)</PanelHead>
        <ColHead>
          <span>Date</span>
          <Num>Lots</Num>
          <Num>Orders</Num>
          <Num>P/L ($)</Num>
        </ColHead>
        <DataRows>
          {stats.map(r => (
            <DataRow key={r[0]} $neg={r[3].startsWith('-')}>
              <span>{r[0]}</span>
              <Num>{r[1]}</Num>
              <Num>{r[2]}</Num>
              <Num>{r[3]}</Num>
            </DataRow>
          ))}
        </DataRows>
        <TotalRow>
          <span>TOTAL</span>
          <Num>4901</Num>
          <Num>990</Num>
          <Num>-15,127</Num>
        </TotalRow>
      </StatsPanel>
      <MarginPanel>
        <MarginHead>MARGIN CALCULATOR</MarginHead>
        <MarginBody>
          {margin.map(m => (
            <div key={m}>{m}</div>
          ))}
        </MarginBody>
      </MarginPanel>
      <CalcRow>
        <LotInput>0.01</LotInput>
        <CalcBtn>Calculate</CalcBtn>
      </CalcRow>
    </Overlay>

    <GhostDialog />
    <Dialog>
      <DlgTitle>
        testing of code 1.00
        <DlgCtrls>
          <svg width={11} height={1} viewBox="0 0 11 1"><rect width={11} height={1} fill="#8a8a8a" /></svg>
          <svg width={10} height={11} viewBox="0 0 10 11" fill="none" stroke="#d4d4d4"><rect x={0.5} y={0.5} width={9} height={10} /></svg>
          <X s={10} />
        </DlgCtrls>
      </DlgTitle>
      <DlgPanel>
        <DlgTabs>
          <DlgTab $w={52}>Common</DlgTab>
          <DlgTab $w={43} $on>Inputs</DlgTab>
          <DlgTab $w={42}>Colors</DlgTab>
          <DlgTab $w={80}>Visualization</DlgTab>
        </DlgTabs>
        <DlgContent>
          <Table>
            <TableList>
              <HeadRow>
                <HeadVar>Variable</HeadVar>
                <HeadVal>Value</HeadVal>
              </HeadRow>
              {params.map(([kind, name, value, swatch], i) => (
                <ParamRow key={i} $alt={i % 2 === 1}>
                  <VarCell>
                    {kind === 'sec' ? (
                      <SectionText>{name}</SectionText>
                    ) : (
                      <>
                        <IconCell>{name && <ParamIcon kind={kind} />}</IconCell>
                        {name}
                      </>
                    )}
                  </VarCell>
                  <ValCell>
                    {swatch && <Swatch $c={swatch} />}
                    {value}
                  </ValCell>
                </ParamRow>
              ))}
            </TableList>
            <Scrollbar>
              <ScrollEnd>
                <svg width={9} height={6} viewBox="0 0 9 6" fill="none" stroke="#404040" strokeWidth={1.5}><path d="M1 5l3.5-3.5L8 5" /></svg>
              </ScrollEnd>
              <Thumb />
              <ScrollTrack />
              <ScrollEnd>
                <svg width={9} height={6} viewBox="0 0 9 6" fill="none" stroke="#404040" strokeWidth={1.5}><path d="M1 1l3.5 3.5L8 1" /></svg>
              </ScrollEnd>
            </Scrollbar>
          </Table>
          <SideBtns>
            <DlgBtn>Load</DlgBtn>
            <DlgBtn>Save</DlgBtn>
          </SideBtns>
        </DlgContent>
      </DlgPanel>
      <DlgFooter>
        <DlgBtn $w={73}>OK</DlgBtn>
        <DlgBtn $w={73}>Cancel</DlgBtn>
        <DlgBtn $w={73}>Reset</DlgBtn>
        <Grip width={11} height={11} viewBox="0 0 11 11">
          <path d="M8 0h2v2H8zM4 4h2v2H4zM8 4h2v2H8zM0 8h2v2H0zM4 8h2v2H4zM8 8h2v2H8z" fill="#c4c4c4" />
        </Grip>
      </DlgFooter>
    </Dialog>
  </Root>
);

export default App;
